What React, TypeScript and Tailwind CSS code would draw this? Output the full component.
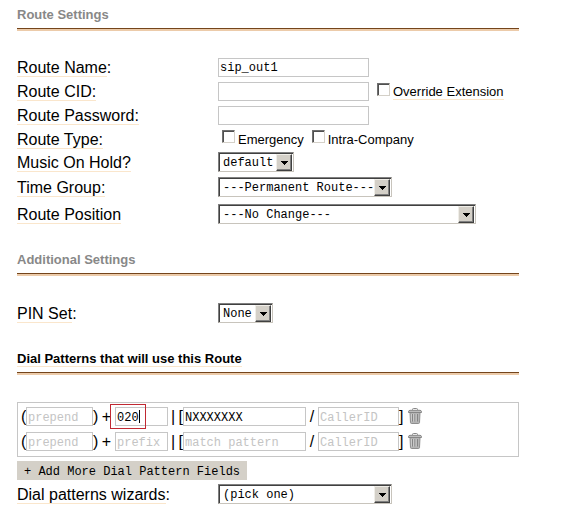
import clsx from "clsx";
import type { FC, InputHTMLAttributes, ReactNode } from "react";

const mono = "font-['Liberation_Mono',monospace] text-[12px] leading-4 text-black";

const TextInput: FC<InputHTMLAttributes<HTMLInputElement>> = ({
	className,
	...props
}) => (
	<input
		type="text"
		className={clsx(
			"h-[19px] shrink-0 rounded-none border border-[#c6c6c6] bg-white px-px pt-0.5 outline-none placeholder:text-[#c4c4c4]",
			mono,
			className,
		)}
		{...props}
	/>
);

const Select: FC<{ id: string; option: string; className: string }> = ({
	id,
	option,
	className,
}) => (
	<div className={clsx("relative h-5 shrink-0", className)}>
		<select
			id={id}
			className={clsx(
				"block h-full w-full appearance-none rounded-none border border-t-[#808080] border-r-[#c8c4bc] border-b-[#c8c4bc] border-l-[#808080] bg-white pt-0.5 pl-1 shadow-[inset_1px_1px_0_#404040] outline-none",
				mono,
			)}
		>
			<option>{option}</option>
		</select>
		<span className="pointer-events-none absolute top-0.5 right-0.5 bottom-px flex w-4 items-center justify-center border border-t-[#f0eee8] border-r-[#404040] border-b-[#404040] border-l-[#f0eee8] bg-[#d4d0c8] shadow-[inset_-1px_-1px_0_#808080]">
			<svg width="7" height="4" viewBox="0 0 7 4" aria-hidden="true">
				<path
					d="M0 0h7v1H0zM1 1h5v1H1zM2 2h3v1H2zM3 3h1v1H3z"
					shapeRendering="crispEdges"
				/>
			</svg>
		</span>
	</div>
);

const Checkbox: FC<{ id: string; children: ReactNode }> = ({
	id,
	children,
}) => (
	<span className="flex items-center gap-[3px]">
		<input
			id={id}
			type="checkbox"
			className="mb-1 size-[13px] appearance-none border border-t-[#707070] border-r-[#d4d0c8] border-b-[#d4d0c8] border-l-[#707070] bg-white shadow-[inset_1px_1px_0_#505050]"
		/>
		<label htmlFor={id} className="pt-0.5 text-[13px] leading-4">
			{children}
		</label>
	</span>
);

const Hint: FC<{ children: ReactNode }> = ({ children }) => (
	<span className="border-b border-[#fae6cc]">{children}</span>
);

const Row: FC<{
	id: string;
	label: string;
	suffix?: string;
	height?: string;
	children: ReactNode;
}> = ({ id, label, suffix, height = "h-6", children }) => (
	<div className={clsx("grid grid-cols-[201px_1fr] items-center", height)}>
		<label htmlFor={id} className="pt-0.5 text-[16px] leading-[18px]">
			<Hint>{label}</Hint>
			{suffix}
		</label>
		<div className="flex items-center">{children}</div>
	</div>
);

const Heading: FC<{ className?: string; children: ReactNode }> = ({
	className = "text-[#888888]",
	children,
}) => (
	<h2
		className={clsx(
			"border-b-2 border-[#eccbaa] text-[13px] leading-4 font-bold",
			className,
		)}
	>
		<span className="block border-b border-[#74451c] pb-[5px]">{children}</span>
	</h2>
);

const TrashIcon: FC = () => (
	<svg width="14" height="16" viewBox="0 0 14 16" aria-hidden="true">
		<path d="M4.5 2V1.400Q4.500.5 5.500.5h3q1 0 1 .9V2" fill="none" stroke="#888" />
		<path d="M2 4.500h10l-.5 10.200q-.1.8-1 .8h-7q-.9 0-1-.8z" fill="#b4b4b4" stroke="#8e8e8e" />
		<path d="M.5 4.500V3.400Q.6 2.500 2 2.300h10q1.400.2 1.500 1.100v1.100z" fill="#bdbdbd" stroke="#868686" />
		<path d="M4.500 6v7.500M7 6v7.500M9.500 6v7.500" stroke="#858585" />
		<path d="M5.500 6v7.500M8 6v7.500M3.500 6v7.500" stroke="#d4d4d4" strokeWidth=".7" />
	</svg>
);

const PatternRow: FC<{
	prefix?: string;
	match?: string;
	active?: boolean;
}> = ({ prefix, match, active }) => (
	<div className="flex h-[25px] items-center text-[16px] leading-[18px]">
		<span className="w-[5px]">(</span>
		<TextInput aria-label="Prepend" placeholder="prepend" className="w-[67px]" />
		<span className="flex w-[22px] justify-between pr-1">
			<span>)</span>
			<span>+</span>
		</span>
		<span className="relative flex">
			<TextInput
				aria-label="Prefix"
				placeholder="prefix"
				defaultValue={prefix}
				className="w-[53px]"
			/>
			{active && (
				<>
					<span className="pointer-events-none absolute top-[3px] left-6 h-[13px] w-px bg-black" />
					<span className="pointer-events-none absolute -top-[3px] -left-[5px] h-[25px] w-9 border border-[#c02832]" />
				</>
			)}
		</span>
		<span className="flex w-[15px] justify-between pl-[3px]">
			<span>|</span>
			<span>[</span>
		</span>
		<TextInput
			aria-label="Match pattern"
			placeholder="match pattern"
			defaultValue={match}
			className="w-[123px]"
		/>
		<span className="w-3 text-center">/</span>
		<TextInput aria-label="CallerID" placeholder="CallerID" className="w-[81px]" />
		<span className="w-[9px]">]</span>
		<button type="button" aria-label="Delete pattern" className="pb-0.5">
			<TrashIcon />
		</button>
	</div>
);

const App: FC = () => (
	<form className="bg-white pt-[7px] pr-[45px] pb-2 pl-[17px] font-['Liberation_Sans',Arial,sans-serif] text-black">
		<Heading>Route Settings</Heading>
		<div className="mt-6">
			<Row id="name" label="Route Name" suffix=":">
				<TextInput id="name" defaultValue="sip_out1" className="w-[151px]" />
			</Row>
			<Row id="cid" label="Route CID:">
				<TextInput id="cid" className="w-[151px]" />
				<span className="ml-2">
					<Checkbox id="override">
						<Hint>Override Extension</Hint>
					</Checkbox>
				</span>
			</Row>
			<Row id="password" label="Route Password:">
				<TextInput id="password" className="w-[151px]" />
			</Row>
			<Row id="emergency" label="Route Type:" height="h-[23px]">
				<div className="flex gap-2 pl-1">
					<Checkbox id="emergency">Emergency</Checkbox>
					<Checkbox id="intra">Intra-Company</Checkbox>
				</div>
			</Row>
			<Row id="hold" label="Music On Hold?">
				<Select id="hold" option="default" className="w-[76px]" />
			</Row>
			<Row id="time" label="Time Group:" height="h-[26px]">
				<Select id="time" option="---Permanent Route---" className="w-[174px]" />
			</Row>
			<Row id="position" label="Route Position" height="h-7">
				<Select id="position" option="---No Change---" className="w-[258px]" />
			</Row>
		</div>
		<div className="mt-6">
			<Heading>Additional Settings</Heading>
		</div>
		<div className="mt-6">
			<Row id="pin" label="PIN Set" suffix=":" height="h-[26px]">
				<Select id="pin" option="None" className="w-[55px]" />
			</Row>
		</div>
		<div className="mt-[25px]">
			<Heading className="text-black">
				<Hint>Dial Patterns that will use this Route</Hint>
			</Heading>
		</div>
		<div className="mt-[27px] border border-[#c6c6c6] px-[3px] pt-px pb-0.5">
			<PatternRow prefix="020" match="NXXXXXXX" active />
			<PatternRow />
		</div>
		<button
			type="button"
			className={clsx("mt-1 block h-[19px] bg-[#d4d0c8] px-[7px] pt-0.5", mono)}
		>
			+ Add More Dial Pattern Fields
		</button>
		<div className="mt-0.5">
			<Row id="wizard" label="Dial patterns wizards" suffix=":">
				<Select id="wizard" option="(pick one)" className="w-[174px]" />
			</Row>
		</div>
	</form>
);

export default App;
